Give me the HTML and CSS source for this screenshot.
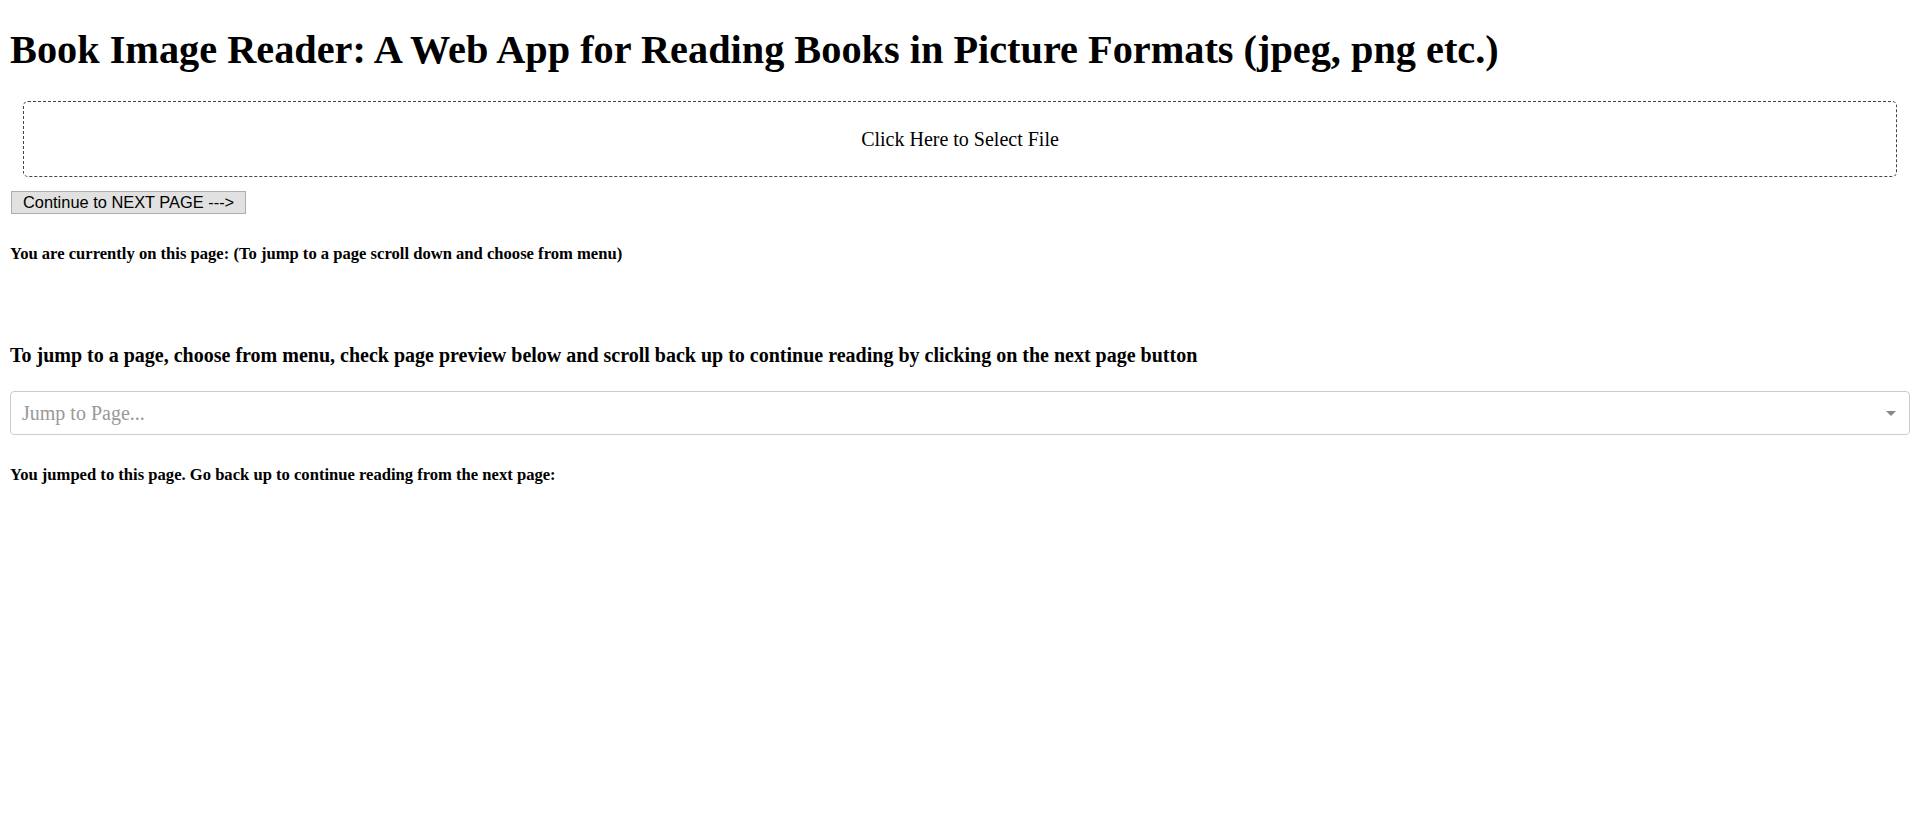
FILE: index.html
```html
<!DOCTYPE html>
<html>
<head>
<meta charset="utf-8">
<title>Book Image Reader</title>
<link rel="stylesheet" href="styles.css">
</head>
<body>
<h1 class="title">Book Image Reader: A Web App for Reading Books in Picture Formats (jpeg, png etc.)</h1>
<div class="dropzone">Click Here to Select File</div>
<button class="next-btn">Continue to NEXT PAGE ---&gt;</button>
<h4 class="note">You are currently on this page: (To jump to a page scroll down and choose from menu)</h4>
<div class="page-view"></div>
<h3 class="jump-title">To jump to a page, choose from menu, check page preview below and scroll back up to continue reading by clicking on the next page button</h3>
<div class="select">
  <span class="placeholder">Jump to Page...</span>
  <span class="arrow"></span>
</div>
<h4 class="note jumped">You jumped to this page. Go back up to continue reading from the next page:</h4>
</body>
</html>
```
FILE: styles.css
```css
html, body {
  background: #ffffff;
}
body {
  margin: 8px 10px;
  font-family: "Liberation Serif", "Times New Roman", serif;
  color: #000;
}
.title {
  font-size: 40.3px;
  font-weight: bold;
  margin: 20px 0 0 0;
  line-height: 44px;
}
.dropzone {
  margin: 29px 13px 0 13px;
  height: 74px;
  border: 1px dashed #444;
  border-radius: 5px;
  display: flex;
  align-items: center;
  justify-content: center;
  font-size: 20px;
}
.next-btn {
  margin: 14px 0 0 1px;
  display: block;
  font-family: "Liberation Sans", Arial, sans-serif;
  font-size: 16.4px;
  height: 23px;
  padding: 0 11px;
  background: #e1e1e1;
  border: 1px solid #adadad;
  color: #000;
}
.note {
  font-size: 16.6px;
  font-weight: bold;
  margin: 30px 0 0 0;
  line-height: 20px;
}
.page-view {
  height: 60px;
}
.jump-title {
  font-size: 20px;
  font-weight: bold;
  margin: 19px 0 0 0;
  line-height: 24px;
}
.select {
  margin: 24px 0 0 0;
  height: 42px;
  border: 1px solid #cccccc;
  border-radius: 4px;
  display: flex;
  align-items: center;
  justify-content: space-between;
  padding: 0 13px 0 11px;
}
.placeholder {
  color: #999999;
  font-size: 20px;
}
.arrow {
  width: 0;
  height: 0;
  border-left: 5px solid transparent;
  border-right: 5px solid transparent;
  border-top: 5px solid #888888;
}
.jumped {
  margin-top: 30px;
}
```
